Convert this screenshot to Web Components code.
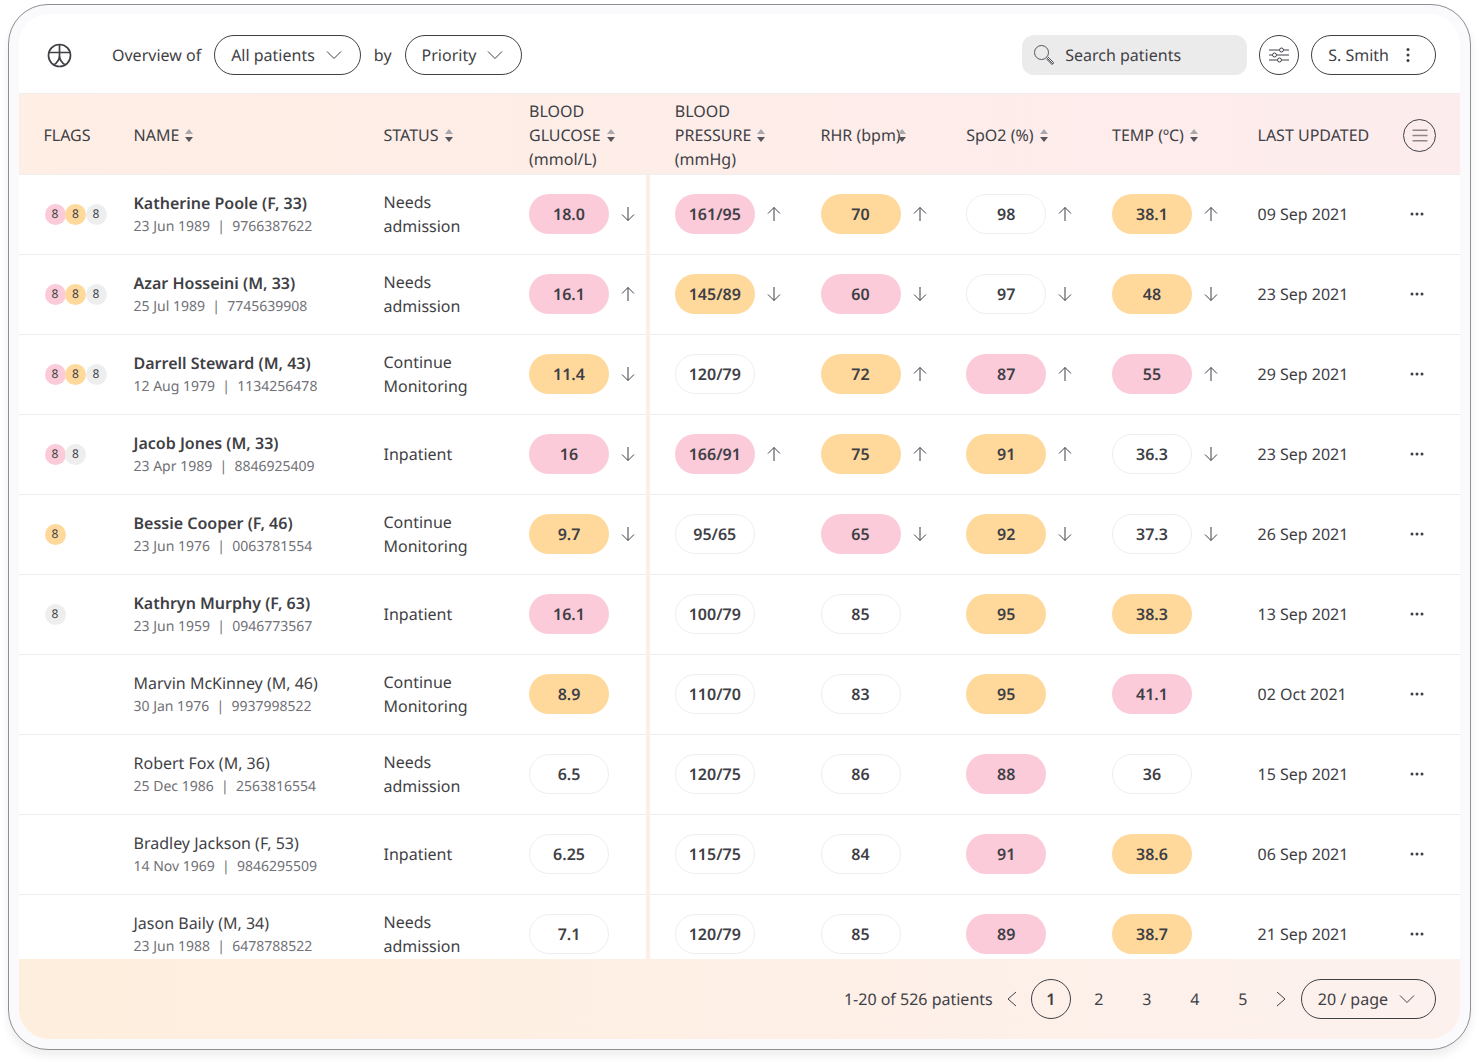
<!DOCTYPE html>
<html lang="en"><head><meta charset="utf-8"><title>Patients</title>
<style>
html,body{margin:0;padding:0;background:#fff;}
body{font-family:"Noto Sans",sans-serif;color:#3f3f46;width:1479px;height:1062px;overflow:hidden;text-rendering:geometricPrecision;}
</style></head><body>
<patient-app></patient-app>
<script>
const ICON={
 chev:'<svg width="16" height="10" viewBox="0 0 16 10" fill="none" stroke="#3f3f46" stroke-width="1"><path d="M1 1.500 8 8.500 15 1.500"/></svg>',
 up:'<svg width="14" height="16" viewBox="0 0 14 16" fill="none" stroke="#3f3f46" stroke-width="1"><path d="M7 15V1.500M1 7.500 7 1.500 13 7.500"/></svg>',
 down:'<svg width="14" height="16" viewBox="0 0 14 16" fill="none" stroke="#3f3f46" stroke-width="1"><path d="M7 1V14.500M1 8.500 7 14.500 13 8.500"/></svg>',
 sort:'<svg width="8" height="13" viewBox="0 0 8 13"><path d="M4 0 8 5H0Z" fill="#a8a8ad"/><path d="M0 8H8L4 13Z" fill="#55555b"/></svg>'
};
class AppFrame extends HTMLElement{constructor(){super();this.attachShadow({mode:'open'}).innerHTML=`<style>
:host{display:block;box-sizing:border-box;width:1463px;height:1046px;margin:4px 0 0 8px;background:#fafafc;border:1px solid #8e8e93;border-radius:40px;padding:9px 10px 10px;box-shadow:0 6px 10px rgba(0,0,0,.07);}
.in{height:100%;background:#fff;border-radius:30px;overflow:hidden;display:flex;flex-direction:column;}
</style><div class="in"><slot></slot></div>`}}
customElements.define('app-frame',AppFrame);

class PillButton extends HTMLElement{constructor(){super();this.attachShadow({mode:'open'}).innerHTML=`<style>
:host{display:inline-flex;box-sizing:border-box;align-items:center;height:40px;border:1px solid #3f3f46;border-radius:20px;padding:0 18px 0 16px;font-size:16px;color:#3f3f46;background:transparent;white-space:nowrap;}
::slotted(svg){margin-left:11px}
</style><slot></slot>`}}
customElements.define('pill-button',PillButton);

class TopBar extends HTMLElement{constructor(){super();this.attachShadow({mode:'open'}).innerHTML=`<style>
:host{display:flex;align-items:center;height:80px;box-sizing:border-box;padding:3px 24px 0 28px;flex:none;font-size:16px;color:#3f3f46;border-bottom:1px solid #eeeeee;}
.logo{margin-right:40px;display:flex}
.t{margin-right:13px}
.by{margin:0 13px}
.sp{flex:1}
.search{display:flex;align-items:center;box-sizing:border-box;width:225px;height:40px;border-radius:12px;background:#ebebeb;padding-left:11px;gap:10px;margin-right:12px;color:#3f3f46}
.round{box-sizing:border-box;width:40px;height:40px;border-radius:50%;border:1px solid #3f3f46;display:flex;align-items:center;justify-content:center;margin-right:12px}
</style>
<span class="logo"><svg width="25" height="25" viewBox="0 0 25 25" fill="none" stroke="#3f3f46" stroke-width="1.700"><circle cx="12.500" cy="12.500" r="11"/><path d="M2 9.500H23M12.500 2V12.500M12.500 12.500C12.500 17 10 20 6.500 22M12.500 12.500C12.500 17 15 20 18.500 22"/></svg></span>
<span class="t">Overview of</span>
<pill-button>All patients ${ICON.chev}</pill-button>
<span class="by">by</span>
<pill-button>Priority ${ICON.chev}</pill-button>
<span class="sp"></span>
<div class="search"><svg width="22" height="22" viewBox="0 0 22 22" fill="none" stroke="#55555b" stroke-width="1"><circle cx="8.500" cy="8.500" r="7"/><path d="M13.500 13.500 20 20M15 13 20.800 18.800 19 20.600 13.500 15"/></svg><span>Search patients</span></div>
<div class="round"><svg width="20" height="16" viewBox="0 0 20 16" fill="none" stroke="#3f3f46" stroke-width="1"><path d="M0 3H10M15 3H20M0 8H3M8 8H20M0 13H8M13 13H20"/><circle cx="12.500" cy="3" r="2"/><circle cx="5.500" cy="8" r="2"/><circle cx="10.500" cy="13" r="2"/></svg></div>
<pill-button>S. Smith <svg style="margin-left:14px;margin-right:2px" width="12" height="16" viewBox="0 0 12 16" fill="#3f3f46"><circle cx="5" cy="2.500" r="1.500"/><circle cx="5" cy="8" r="1.500"/><circle cx="5" cy="13.500" r="1.500"/></svg></pill-button>`}}
customElements.define('top-bar',TopBar);

const GRID='grid-template-columns:90px 250px 145.5px 145.75px 145.75px 145.75px 145.75px 145.5px 145.5px 33px;';
class TableHead extends HTMLElement{constructor(){super();
 const s=`<i>${ICON.sort}</i>`;
 this.attachShadow({mode:'open'}).innerHTML=`<style>
:host{display:grid;${GRID}flex:none;height:81px;padding:2px 24px 0 24.5px;box-sizing:border-box;align-items:center;background:linear-gradient(90deg,#feeee4,#fdeced);font-size:16px;line-height:24px;color:#3f3f46;border-bottom:1px solid #eeeeee;}
.c{white-space:nowrap}
i{display:inline-block;vertical-align:-1px;margin-left:6px;line-height:0}
.rhr i{margin-left:-3px}
.m{box-sizing:border-box;width:33px;height:33px;border-radius:50%;border:1px solid #3f3f46;display:flex;align-items:center;justify-content:center}
</style>
<div class="c">FLAGS</div><div class="c">NAME${s}</div><div class="c">STATUS${s}</div>
<div class="c">BLOOD<br>GLUCOSE${s}<br>(mmol/L)</div>
<div class="c">BLOOD<br>PRESSURE${s}<br>(mmHg)</div>
<div class="c rhr">RHR (bpm)${s}</div><div class="c">SpO2 (%)${s}</div><div class="c">TEMP (ºC)${s}</div><div class="c">LAST UPDATED</div>
<div class="m"><svg width="16" height="13" viewBox="0 0 16 13" fill="none" stroke="#8e8689" stroke-width="1.500"><path d="M.5 1.250H15.500M.5 6.500H15.500M.5 11.750H15.500"/></svg></div>`}}
customElements.define('table-head',TableHead);

class FlagDots extends HTMLElement{constructor(){super();
 const col={p:'#fbcbd9',o:'#fed99b',g:'#eeeeee'};
 const s=this.getAttribute('flags')||'';
 this.attachShadow({mode:'open'}).innerHTML=`<style>
:host{display:flex;padding-left:1px;}
b{display:flex;flex:none;align-items:center;justify-content:center;width:21px;height:21px;border-radius:50%;font-weight:400;font-size:12px;color:#3f3f46;margin-right:-.5px}
</style>`+[...s].map(k=>`<b style="background:${col[k]}">8</b>`).join('')}}
customElements.define('flag-dots',FlagDots);

class VitalPill extends HTMLElement{constructor(){super();
 const k=this.getAttribute('level'),tr=this.getAttribute('trend');
 const st={p:'background:#fbcbd9;',o:'background:#fed99b;',w:'background:#fff;border:1px solid #eeeeee;'}[k];
 this.attachShadow({mode:'open'}).innerHTML=`<style>
:host{display:flex;align-items:center;height:40px}
.p{box-sizing:border-box;width:80px;height:40px;border-radius:20px;display:flex;align-items:center;justify-content:center;font-size:16px;font-weight:600;color:#3f3f46;${st}}
.t{margin-left:12px;display:flex}
</style><div class="p"><slot></slot></div>${tr?`<span class="t">${ICON[tr]}</span>`:''}`}}
customElements.define('vital-pill',VitalPill);

class PatientRow extends HTMLElement{constructor(){super();
 const d=JSON.parse(this.getAttribute('data'));
 const v=(x)=>`<vital-pill level="${x[1]}" ${x[2]?`trend="${x[2]}"`:''}>${x[0]}</vital-pill>`;
 this.attachShadow({mode:'open'}).innerHTML=`<style>
:host{display:grid;${GRID}flex:none;height:80px;padding:0 24px 2px 24.5px;box-sizing:border-box;align-items:center;background:linear-gradient(#eeeeee,#eeeeee) bottom/100% 1px no-repeat;font-size:16px;line-height:24px;color:#3f3f46;}
.nm{padding-top:2px}
.n{font-weight:${d.bold?600:400};line-height:22px;white-space:nowrap}
.s{font-size:14px;line-height:22px;margin-top:2px;color:#717177;white-space:pre}
.gl{align-self:stretch;display:flex;align-items:center;box-sizing:border-box;width:121px;border-right:4px solid #fdeee6;margin-bottom:-2px;padding-bottom:2px}
.more{display:flex;padding-left:7px}
</style>
<flag-dots flags="${d.flags}"></flag-dots>
<div class="nm"><div class="n">${d.name}</div><div class="s">${d.sub}</div></div>
<div>${d.status}</div>
<div class="gl">${v(d.gl)}</div><div>${v(d.bp)}</div><div>${v(d.rhr)}</div><div>${v(d.spo)}</div><div>${v(d.temp)}</div>
<div>${d.date}</div>
<div class="more"><svg width="14" height="4" viewBox="0 0 14 4" fill="#3f3f46"><circle cx="2" cy="2" r="1.500"/><circle cx="7" cy="2" r="1.500"/><circle cx="12" cy="2" r="1.500"/></svg></div>`}}
customElements.define('patient-row',PatientRow);

class PagerBar extends HTMLElement{constructor(){super();
 this.attachShadow({mode:'open'}).innerHTML=`<style>
:host{display:flex;align-items:center;justify-content:flex-end;height:80px;flex:none;box-sizing:border-box;padding:0 24px 0 0;background:linear-gradient(90deg,#feeedd,#fdf1ee);font-size:16px;color:#3f3f46;}
.i{margin:0 13px;display:flex}
.pg{width:40px;height:40px;margin-right:8px;display:flex;align-items:center;justify-content:center;box-sizing:border-box}
.a{border:1px solid #3f3f46;border-radius:50%;font-weight:600}
pill-button{margin-left:14px;padding-right:20px}
.i2{display:flex}
</style>
<span>1-20 of 526 patients</span>
<span class="i"><svg width="12" height="16" viewBox="0 0 12 16" fill="none" stroke="#3f3f46" stroke-width="1"><path d="M10 1 2 8 10 15"/></svg></span>
<div class="pg a">1</div><div class="pg">2</div><div class="pg">3</div><div class="pg">4</div><div class="pg" style="margin-right:12px">5</div>
<span class="i2"><svg width="12" height="16" viewBox="0 0 12 16" fill="none" stroke="#3f3f46" stroke-width="1"><path d="M2 1 10 8 2 15"/></svg></span>
<pill-button>20 / page ${ICON.chev}</pill-button>`}}
customElements.define('pager-bar',PagerBar);

const P=[
 {bold:1,flags:'pog',name:'Katherine Poole (F, 33)',sub:'23 Jun 1989  |  9766387622',status:'Needs<br>admission',gl:['18.0','p','down'],bp:['161/95','p','up'],rhr:['70','o','up'],spo:['98','w','up'],temp:['38.1','o','up'],date:'09 Sep 2021'},
 {bold:1,flags:'pog',name:'Azar Hosseini (M, 33)',sub:'25 Jul 1989  |  7745639908',status:'Needs<br>admission',gl:['16.1','p','up'],bp:['145/89','o','down'],rhr:['60','p','down'],spo:['97','w','down'],temp:['48','o','down'],date:'23 Sep 2021'},
 {bold:1,flags:'pog',name:'Darrell Steward (M, 43)',sub:'12 Aug 1979  |  1134256478',status:'Continue<br>Monitoring',gl:['11.4','o','down'],bp:['120/79','w'],rhr:['72','o','up'],spo:['87','p','up'],temp:['55','p','up'],date:'29 Sep 2021'},
 {bold:1,flags:'pg',name:'Jacob Jones (M, 33)',sub:'23 Apr 1989  |  8846925409',status:'Inpatient',gl:['16','p','down'],bp:['166/91','p','up'],rhr:['75','o','up'],spo:['91','o','up'],temp:['36.3','w','down'],date:'23 Sep 2021'},
 {bold:1,flags:'o',name:'Bessie Cooper (F, 46)',sub:'23 Jun 1976  |  0063781554',status:'Continue<br>Monitoring',gl:['9.7','o','down'],bp:['95/65','w'],rhr:['65','p','down'],spo:['92','o','down'],temp:['37.3','w','down'],date:'26 Sep 2021'},
 {bold:1,flags:'g',name:'Kathryn Murphy (F, 63)',sub:'23 Jun 1959  |  0946773567',status:'Inpatient',gl:['16.1','p'],bp:['100/79','w'],rhr:['85','w'],spo:['95','o'],temp:['38.3','o'],date:'13 Sep 2021'},
 {flags:'',name:'Marvin McKinney (M, 46)',sub:'30 Jan 1976  |  9937998522',status:'Continue<br>Monitoring',gl:['8.9','o'],bp:['110/70','w'],rhr:['83','w'],spo:['95','o'],temp:['41.1','p'],date:'02 Oct 2021'},
 {flags:'',name:'Robert Fox (M, 36)',sub:'25 Dec 1986  |  2563816554',status:'Needs<br>admission',gl:['6.5','w'],bp:['120/75','w'],rhr:['86','w'],spo:['88','p'],temp:['36','w'],date:'15 Sep 2021'},
 {flags:'',name:'Bradley Jackson (F, 53)',sub:'14 Nov 1969  |  9846295509',status:'Inpatient',gl:['6.25','w'],bp:['115/75','w'],rhr:['84','w'],spo:['91','p'],temp:['38.6','o'],date:'06 Sep 2021'},
 {flags:'',name:'Jason Baily (M, 34)',sub:'23 Jun 1988  |  6478788522',status:'Needs<br>admission',gl:['7.1','w'],bp:['120/79','w'],rhr:['85','w'],spo:['89','p'],temp:['38.7','o'],date:'21 Sep 2021'}
];
class PatientApp extends HTMLElement{constructor(){super();
 this.attachShadow({mode:'open'}).innerHTML=`<style>:host{display:block}
 .body{flex:1;min-height:0;overflow:hidden;display:flex;flex-direction:column}</style>
 <app-frame><top-bar></top-bar><table-head></table-head><div class="body">${P.map(p=>`<patient-row data='${JSON.stringify(p)}'></patient-row>`).join('')}</div><pager-bar></pager-bar></app-frame>`;
}}
customElements.define('patient-app',PatientApp);
</script>
</body></html>
